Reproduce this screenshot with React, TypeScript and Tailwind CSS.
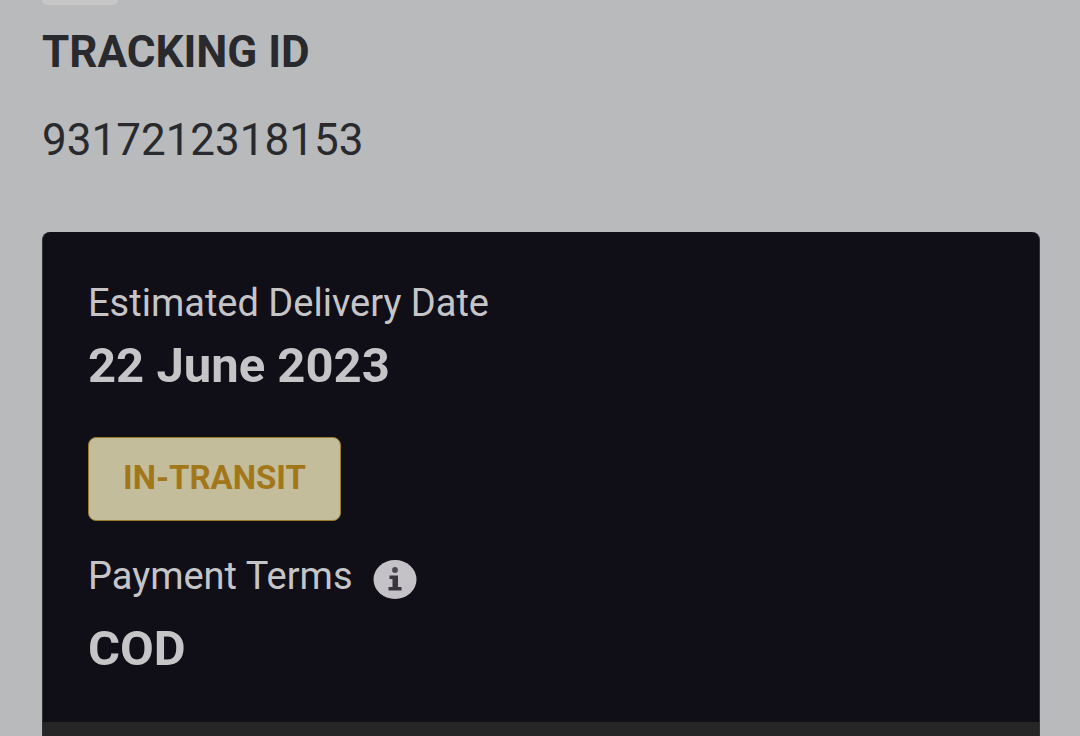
import React from "react";

interface Shipment {
  trackingId: string;
  deliveryDate: string;
  status: string;
  paymentTerms: string;
}

const shipment: Shipment = {
  trackingId: "9317212318153",
  deliveryDate: "22 June 2023",
  status: "IN-TRANSIT",
  paymentTerms: "COD",
};

const InfoIcon: React.FC = () => (
  <svg viewBox="0 0 44 40" className="w-11 h-10" aria-hidden="true">
    <ellipse cx="22" cy="20.5" rx="21.5" ry="19.5" fill="#c4c2c6" />
    <circle cx="22" cy="11" r="2.9" fill="#4a484e" />
    <path d="M16.5 16.5h8.5v11.5h3.5v3.5H15.5V28h4v-8h-3z" fill="#39373e" />
  </svg>
);

const App: React.FC = () => {
  return (
    <main className="min-h-screen flex flex-col bg-[#b9babc] pl-[42px] pr-10 font-['Roboto',sans-serif] text-[#292a2d]">
      {/* Tab above the heading */}
      <div className="w-[76px] h-[5px] rounded-b-md bg-[#c6c6c6]" />

      <h1 className="mt-6 text-[44px] leading-[46px] font-bold">TRACKING ID</h1>
      <p className="mt-[41px] text-[44px] leading-[48px]">{shipment.trackingId}</p>

      {/* Shipment card */}
      <section className="mt-[68px] grow flex flex-col overflow-hidden rounded-t-lg border-x border-[#303035] bg-[#100e17] text-[#c5c5c7]">
        <div className="px-[45px] pt-12 pb-[45px]">
          <p className="text-[38px] leading-[46px]">Estimated Delivery Date</p>
          <p className="mt-3 text-[49px] leading-[56px] font-bold">{shipment.deliveryDate}</p>

          <span className="mt-[43px] flex w-fit h-[84px] items-center rounded-lg border border-[#9b7a2d] bg-[#c3bd9c] px-[34px] pb-0.5 text-[33px] font-bold text-[#a2771a]">
            {shipment.status}
          </span>

          <div className="mt-8 flex items-end gap-5">
            <p className="text-[38px] leading-[46px]">Payment Terms</p>
            <button type="button" aria-label="Payment terms info">
              <InfoIcon />
            </button>
          </div>
          <p className="mt-[22px] text-[49px] leading-[56px] font-bold">{shipment.paymentTerms}</p>
        </div>
        <div className="grow bg-[#262626]" />
      </section>
    </main>
  );
};

export default App;
